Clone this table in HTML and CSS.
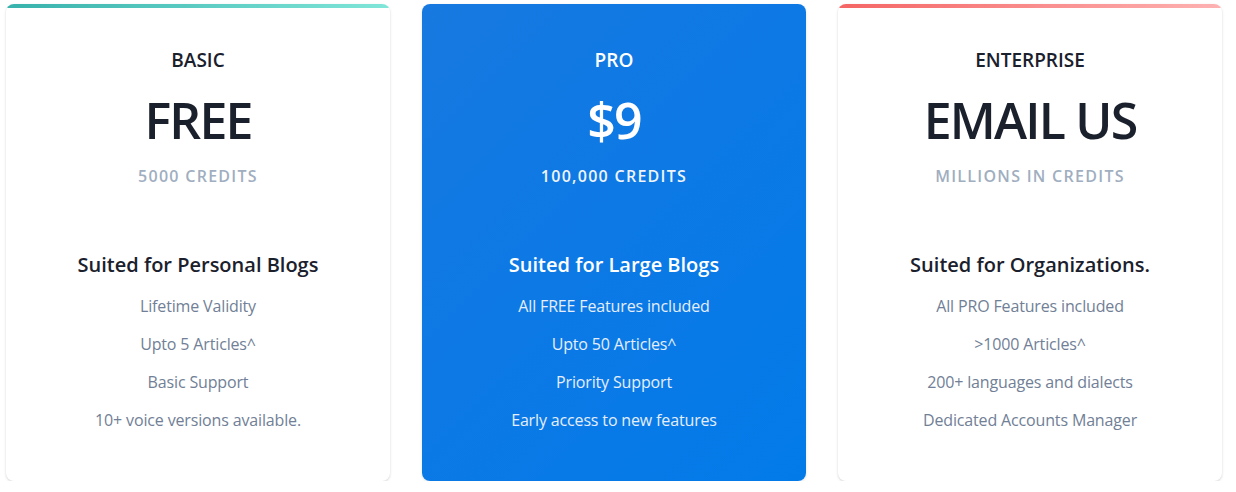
FILE: index.html
```html
<!DOCTYPE html>
<html lang="en">
<head>
<meta charset="utf-8">
<title>Pricing</title>
<link rel="stylesheet" href="styles.css">
</head>
<body>
<div class="pricing">
  <div class="card">
    <div class="bar bar-teal"></div>
    <div class="tier">BASIC</div>
    <div class="price">FREE</div>
    <div class="credits">5000 CREDITS</div>
    <div class="suited">Suited for Personal Blogs</div>
    <ul class="features">
      <li>Lifetime Validity</li>
      <li>Upto 5 Articles^</li>
      <li>Basic Support</li>
      <li>10+ voice versions available.</li>
    </ul>
  </div>
  <div class="card card-pro">
    <div class="bar"></div>
    <div class="tier">PRO</div>
    <div class="price">$9</div>
    <div class="credits">100,000 CREDITS</div>
    <div class="suited">Suited for Large Blogs</div>
    <ul class="features">
      <li>All FREE Features included</li>
      <li>Upto 50 Articles^</li>
      <li>Priority Support</li>
      <li>Early access to new features</li>
    </ul>
  </div>
  <div class="card">
    <div class="bar bar-red"></div>
    <div class="tier">ENTERPRISE</div>
    <div class="price">EMAIL US</div>
    <div class="credits">MILLIONS IN CREDITS</div>
    <div class="suited">Suited for Organizations.</div>
    <ul class="features">
      <li>All PRO Features included</li>
      <li>&gt;1000 Articles^</li>
      <li>200+ languages and dialects</li>
      <li>Dedicated Accounts Manager</li>
    </ul>
  </div>
</div>
</body>
</html>
```

FILE: styles.css
```css
* { box-sizing: border-box; }
html, body { margin: 0; padding: 0; background: #ffffff; }
body {
  font-family: "Open Sans", "Noto Sans", sans-serif;
  color: #1a202c;
}
.pricing {
  display: flex;
  gap: 32px;
  padding: 4px 14px 0 6px;
}
.card {
  width: 384px;
  height: 477px;
  flex: none;
  background: #ffffff;
  border-radius: 8px;
  overflow: hidden;
  box-shadow: 0 1px 3px rgba(0,0,0,0.12), 0 1px 2px rgba(0,0,0,0.06);
  display: flex;
  flex-direction: column;
  align-items: center;
  text-align: center;
}
.bar { height: 4px; align-self: stretch; flex: none; }
.bar-teal { background: linear-gradient(90deg, #38b2ac, #81e6d9); }
.bar-red { background: linear-gradient(90deg, #f56565, #feb2b2); }
.tier {
  margin-top: 38px;
  font-size: 19px;
  line-height: 28px;
  font-weight: 600;
  color: #1a202c;
}
.price {
  margin-top: 20px;
  font-size: 50px;
  line-height: 52px;
  font-weight: 600;
  color: #1a202c;
  letter-spacing: -1.8px;
}
.credits {
  margin-top: 18px;
  font-size: 16px;
  line-height: 24px;
  font-weight: 600;
  letter-spacing: 0.08em;
  color: #a0aec0;
}
.suited {
  margin-top: 63px;
  font-size: 20px;
  line-height: 28px;
  font-weight: 600;
  letter-spacing: 0;
  color: #1a202c;
}
.features {
  list-style: none;
  margin: 15px 0 0;
  padding: 0;
  display: flex;
  flex-direction: column;
  gap: 14px;
}
.features li {
  font-size: 16px;
  line-height: 24px;
  letter-spacing: -0.15px;
  color: #718096;
}
.card-pro {
  background: linear-gradient(135deg, #1779e0 0%, #0c79e5 50%, #027be9 100%);
  box-shadow: 0 1px 3px rgba(0,0,0,0.12);
}
.card-pro .tier,
.card-pro .price,
.card-pro .suited { color: #ffffff; }
.card-pro .credits { color: #f0f5fb; }
.card-pro .features li { color: #e6eefb; }
```
